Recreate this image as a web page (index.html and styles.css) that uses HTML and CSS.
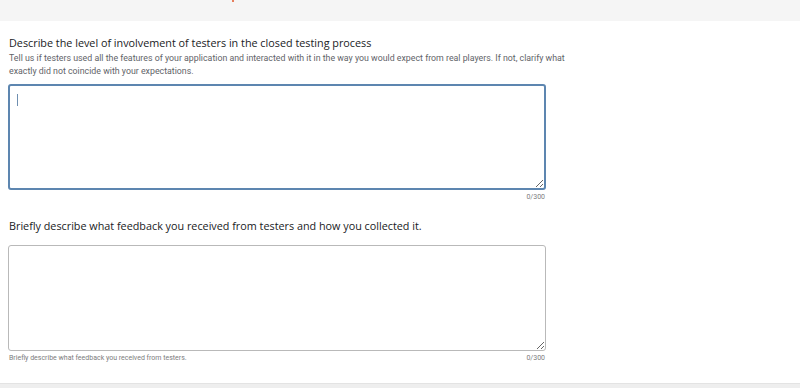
FILE: index.html
```html
<!DOCTYPE html>
<html>
<head>
<title>Closed testing</title>
<link rel="stylesheet" href="styles.css">
</head>
<body>
  <div class='topbar'><span class='dot'></span></div>

  <div class='section'>
    <h2 class='question'>Describe the level of involvement of testers in the closed testing process</h2>
    <p class='hint'>Tell us if testers used all the features of your application and interacted with it in the way you would expect from real players. If not, clarify what exactly did not coincide with your expectations.</p>
    <div class='field'>
      <textarea class='answer focused'></textarea>
      <span class='caret'></span>
    </div>
    <div class='under'>
      <span class='helper'></span>
      <span class='count'>0/300</span>
    </div>
  </div>

  <div class='section second'>
    <h2 class='question'>Briefly describe what feedback you received from testers and how you collected it.</h2>
    <div class='field'>
      <textarea class='answer'></textarea>
    </div>
    <div class='under'>
      <span class='helper'>Briefly describe what feedback you received from testers.</span>
      <span class='count'>0/300</span>
    </div>
  </div>

  <div class='bottombar'></div>
</body>
</html>
```
FILE: styles.css
```css
body{
  margin: 0;
  background-color: #ffffff;
  font-family: 'Roboto', 'Liberation Sans', sans-serif;
  height: 388px;
  display: flex;
  flex-direction: column;
}

.topbar{
  height: 21px;
  background-color: #f5f5f5;
  position: relative;
}
.dot{
  position: absolute;
  left: 232px;
  top: 0;
  width: 2px;
  height: 2px;
  background-color: #e0562a;
  border-radius: 1px;
}

.section{
  width: 538px;
  margin-left: 8px;
  padding-top: 14px;
}
.second{
  padding-top: 16px;
}

.question{
  margin: 0 0 0 1px;
  font-family: 'Open Sans', sans-serif;
  font-weight: 500;
  font-size: 10.8px;
  line-height: 16px;
  color: #202124;
  white-space: nowrap;
}
.second .question{
  margin-bottom: 11px;
}

.hint{
  margin: 1px 0 6px 1px;
  width: 570px;
  font-size: 8.8px;
  line-height: 13px;
  color: #5f6368;
}

.field{
  position: relative;
}
.answer{
  display: block;
  box-sizing: border-box;
  width: 538px;
  height: 106px;
  margin: 0;
  border: 1px solid #b9b9b9;
  border-radius: 3px;
  outline: none;
  resize: vertical;
  background-color: #ffffff;
  padding: 8px 9px;
  font-family: 'Roboto', sans-serif;
  font-size: 11px;
}
.focused{
  border: 2px solid #5d86b0;
}
.caret{
  position: absolute;
  left: 9px;
  top: 10px;
  width: 1px;
  height: 12px;
  background-color: #6f8fb0;
}

.under{
  display: flex;
  justify-content: space-between;
  padding: 3px 1px 0 1px;
  font-size: 7px;
  line-height: 9px;
  color: #7d7d7d;
}

.bottombar{
  margin-top: auto;
  height: 4px;
  background-color: #eeeeee;
  border-top: 1px solid #e3e3e3;
}
```
